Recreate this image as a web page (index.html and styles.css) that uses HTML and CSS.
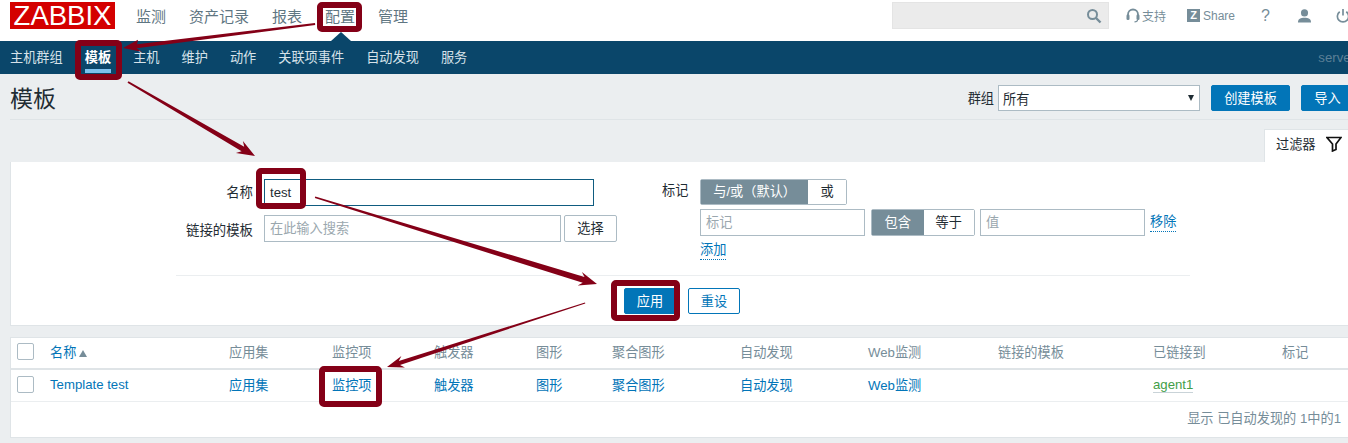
FILE: index.html
```html
<!DOCTYPE html>
<html lang="zh-CN">
<head>
<meta charset="utf-8">
<title>模板</title>
<link rel="stylesheet" href="styles.css">
</head>
<body>
<div class="page">
  <header class="topbar">
    <div class="logo">ZABBIX</div>
    <nav class="mainmenu">
      <a>监测</a><a>资产记录</a><a>报表</a><a class="current">配置</a><a>管理</a>
    </nav>
    <div class="tools">
      <div class="search">
        <svg class="search-icon" width="16" height="16" viewBox="0 0 16 16"><circle cx="6.500" cy="6.500" r="4.500" fill="none" stroke="#768d99" stroke-width="2"/><path d="M10 10l4.500 4.500" stroke="#768d99" stroke-width="2.400"/></svg>
      </div>
      <a class="tool tool-support">
        <svg width="14" height="15" viewBox="0 0 14 15"><path d="M2 8V6.500a5 5 0 0 1 10 0V8" fill="none" stroke="#768d99" stroke-width="1.800"/><rect x="0.500" y="6.500" width="3" height="5.500" rx="1.300" fill="#768d99"/><rect x="10.500" y="6.500" width="3" height="5.500" rx="1.300" fill="#768d99"/><path d="M11.500 12c0 1.400-1.300 1.800-3 1.800" fill="none" stroke="#768d99" stroke-width="1.200"/></svg>
        <span>支持</span>
      </a>
      <a class="tool tool-share"><span class="zbox">Z</span><span>Share</span></a>
      <a class="tool tool-help">?</a>
      <a class="tool tool-user">
        <svg width="15" height="14" viewBox="0 0 16 15"><circle cx="8" cy="4.200" r="3.800" fill="#768d99"/><path d="M1 14.500c0-4 3-5 7-5s7 1 7 5z" fill="#768d99"/></svg>
      </a>
      <a class="tool tool-power">
        <svg width="14" height="14" viewBox="0 0 15 15"><path d="M4 3a6 6 0 1 0 7 0" fill="none" stroke="#768d99" stroke-width="1.800"/><path d="M7.500 0v7" stroke="#768d99" stroke-width="1.800"/></svg>
      </a>
    </div>
  </header>

  <nav class="submenu">
    <div class="submenu-items">
      <a>主机群组</a><a class="active">模板</a><a>主机</a><a>维护</a><a>动作</a><a>关联项事件</a><a>自动发现</a><a>服务</a>
    </div>
    <span class="server">server</span>
  </nav>

  <main class="content">
    <div class="title-row">
      <h1>模板</h1>
      <div class="title-controls">
        <label class="group-label">群组</label>
        <div class="select"><span>所有</span><i class="select-arrow"></i></div>
        <button class="btn btn-primary btn-create">创建模板</button>
        <button class="btn btn-primary btn-import">导入</button>
      </div>
    </div>

    <div class="filter-tabs">
      <div class="filter-tab">
        <span>过滤器</span>
        <svg width="16" height="16" viewBox="0 0 16 16"><path d="M1 1.500h14L10 8v5.500L6.500 15V8z" fill="none" stroke="#111" stroke-width="1.700" stroke-linejoin="miter"/></svg>
      </div>
    </div>

    <section class="filter">
      <div class="filter-form">
        <div class="col-left">
          <div class="form-row row-name">
            <label>名称</label>
            <div class="input input-focus">test</div>
          </div>
          <div class="form-row">
            <label>链接的模板</label>
            <div class="input input-linked placeholder">在此输入搜索</div>
            <button class="btn btn-plain btn-select">选择</button>
          </div>
        </div>
        <div class="col-right">
          <label class="tag-label">标记</label>
          <div class="tag-fields">
            <div class="seg seg-op"><span class="on">与/或（默认）</span><span class="off">或</span></div>
            <div class="tag-row">
              <div class="input input-tag placeholder">标记</div>
              <div class="seg seg-match"><span class="on">包含</span><span class="off">等于</span></div>
              <div class="input input-tag placeholder">值</div>
              <a class="dotted">移除</a>
            </div>
            <a class="dotted add">添加</a>
          </div>
        </div>
      </div>
      <div class="filter-actions">
        <button class="btn btn-primary btn-apply">应用</button>
        <button class="btn btn-outline btn-reset">重设</button>
      </div>
    </section>

    <section class="list">
      <table>
        <colgroup>
          <col class="c-check"><col class="c-name"><col class="c-app"><col class="c-item"><col class="c-trig"><col class="c-graph"><col class="c-agg"><col class="c-disc"><col class="c-web"><col class="c-linked"><col class="c-to"><col class="c-tag">
        </colgroup>
        <thead>
          <tr>
            <th><i class="check"></i></th>
            <th><a class="link">名称</a><i class="sort"></i></th>
            <th>应用集</th><th>监控项</th><th>触发器</th><th>图形</th><th>聚合图形</th><th>自动发现</th><th>Web监测</th><th>链接的模板</th><th>已链接到</th><th>标记</th>
          </tr>
        </thead>
        <tbody>
          <tr>
            <td><i class="check"></i></td>
            <td><a class="link">Template test</a></td>
            <td><a class="link">应用集</a></td>
            <td><a class="link">监控项</a></td>
            <td><a class="link">触发器</a></td>
            <td><a class="link">图形</a></td>
            <td><a class="link">聚合图形</a></td>
            <td><a class="link">自动发现</a></td>
            <td><a class="link">Web监测</a></td>
            <td></td>
            <td><a class="agent">agent1</a></td>
            <td></td>
          </tr>
        </tbody>
      </table>
      <div class="list-footer">显示 已自动发现的 1中的1</div>
    </section>
  </main>
</div>

<svg class="annotations" width="1348" height="443" viewBox="0 0 1348 443">
  <g class="marks">
    <rect x="320" y="5" width="39" height="24" rx="2"/>
    <rect x="78" y="43" width="41" height="34" rx="2"/>
    <rect x="259" y="171" width="44" height="35" rx="2"/>
    <rect x="614" y="283" width="63" height="35" rx="2"/>
    <rect x="322" y="369" width="57" height="35" rx="2"/>
  </g>
  <g class="arrows">
    <polygon points="315,23 315.200,25 136.600,48.300 141.600,51.800 123,48 138,39.800 137.100,44.300"/>
    <polygon points="127.500,82.800 128.500,81.200 244.200,146.800 242.900,140.900 255,156 235.900,152.900 241.600,151.200"/>
    <polygon points="315.300,196.500 314.800,198 582.700,282.800 577.700,285.400 597,284 581.900,272 584.500,277"/>
    <polygon points="585,302.500 585.300,303.500 400,364.900 405,367.500 387,367 401.400,356.100 398.800,361.100"/>
  </g>
</svg>
</body>
</html>
```

FILE: styles.css
```css
* { box-sizing: border-box; }
html, body { margin: 0; padding: 0; height: 443px; overflow: hidden; }
body {
  background: #ebeef0;
  font-family: "Liberation Sans", "Noto Sans CJK SC", sans-serif;
  font-size: 13.200px;
  color: #1f2c33;
  position: relative;
}
.page { width: 1364px; }

/* top bar */
.topbar {
  height: 41px;
  background: #fff;
  display: flex;
  align-items: flex-start;
  padding: 2px 0 0 10px;
}
.logo {
  width: 105px;
  height: 27px;
  background: #d40000;
  color: #fff;
  font-size: 27.500px;
  line-height: 27px;
  text-align: center;
}
.mainmenu { display: flex; gap: 23px; margin-left: 21px; font-size: 15px; color: #5f7682; line-height: 30px; }
.tools { display: flex; align-items: flex-start; margin-left: auto; width: 472px; color: #768d99; }
.search {
  width: 217px;
  height: 27px;
  background: #ebebeb;
  border: 1px solid #e4e4e4;
  display: flex;
  align-items: center;
  justify-content: flex-end;
  padding-right: 6px;
}
.tool { display: flex; align-items: center; height: 27px; font-size: 12px; color: #768d99; white-space: nowrap; flex: none; }
.tool-support { margin-left: 17px; gap: 2px; }
.tool-share { margin-left: 21px; gap: 3px; }
.zbox {
  width: 13px; height: 13px; background: #768d99; color: #fff;
  font-weight: bold; font-size: 11px; line-height: 13px; text-align: center;
}
.tool-help { margin-left: 26px; font-size: 16px; }
.tool-user { margin-left: 27px; }
.tool-power { margin-left: 24px; }

/* sub nav */
.submenu {
  height: 33px;
  background: #0a466a;
  display: flex;
  justify-content: space-between;
  padding: 0 9px 0 10px;
  position: relative;
}
.submenu::before {
  content: "";
  position: absolute;
  left: 331px;
  top: -9px;
  border-left: 10px solid transparent;
  border-right: 10px solid transparent;
  border-bottom: 9px solid #0a466a;
}
.submenu-items { display: flex; gap: 22px; color: #d6e2e9; line-height: 33px; }
.submenu-items a { height: 33px; position: relative; }
.submenu-items .active { color: #fff; font-weight: bold; }
.submenu-items .active::after {
  content: ""; position: absolute; left: 0; right: 0; bottom: 1px; height: 4px; background: #7dc1ee;
}
.server { color: #5c8097; line-height: 33px; }

/* title */
.content { padding: 0 10px; }
.title-row {
  height: 46px;
  border-bottom: 1px solid #dfe4e7;
  display: flex;
  justify-content: space-between;
  align-items: flex-start;
}
h1 { margin: 0; font-size: 23px; font-weight: normal; line-height: 50px; color: #1f2c33; }
.title-controls { display: flex; align-items: center; margin-top: 11px; }
.group-label { margin-right: 4px; padding-bottom: 2px; }
.select {
  width: 202px; height: 26px; background: #fff; border: 1px solid #acbbc4;
  display: flex; align-items: center; justify-content: space-between; padding: 0 5px 0 4px;
}
.select-arrow { width: 0; height: 0; border-left: 3.500px solid transparent; border-right: 3.500px solid transparent; border-top: 6px solid #1f2c33; }
.btn {
  font-family: inherit; font-size: 13.200px; height: 26px; border-radius: 2px; padding: 0 0 2px; cursor: pointer;
}
.btn-primary { background: #0275b8; border: 1px solid #0275b8; color: #fff; }
.btn-create { width: 79px; margin-left: 11px; }
.btn-import { width: 53px; margin-left: 11px; }
.btn-plain { background: #fff; border: 1px solid #acbbc4; color: #1f2c33; }
.btn-outline { background: #fff; border: 1px solid #0275b8; color: #0275b8; }

/* filter */
.filter-tabs { display: flex; justify-content: flex-end; margin-top: 9px; }
.filter-tab {
  width: 90px; height: 33px; background: #fff; border: 1px solid #dfe4e7; border-bottom: 0;
  display: flex; align-items: center; gap: 10px; padding: 0 0 5px 11px; color: #1f2c33;
}
.filter {
  height: 164px;
  background: #fff;
  border: 1px solid #dfe4e7;
  border-top: 0;
  padding-top: 17px;
}
.filter-form { display: flex; height: 97px; margin-left: 165px; width: 1014px; border-bottom: 1px solid #ebeef0; }
.col-left { width: 486px; }
.form-row { display: flex; align-items: center; margin-bottom: 9px; }
.form-row label { width: 77px; text-align: right; margin-right: 11px; font-size: 13.400px; white-space: nowrap; }
.row-name label { position: relative; top: -2px; }
.input {
  height: 27px; background: #fff; border: 1px solid #acbbc4; padding: 0 5px; line-height: 25px;
}
.input-focus { width: 330px; border-color: #0f5c80; }
.input-linked { width: 297px; }
.placeholder { color: #9aa7ae; }
.btn-select { width: 53px; height: 27px; margin-left: 3px; }
.col-right { display: flex; }
.tag-label { width: 38px; line-height: 24px; }
.seg { display: flex; height: 26px; border: 1px solid #acbbc4; border-radius: 2px; line-height: 24px; text-align: center; }
.seg .on { background: #768d99; color: #fff; }
.seg .off { background: #fff; color: #1f2c33; }
.seg-op { width: 147px; }
.seg-op .on { width: 108px; }
.seg-op .off { width: 38px; }
.tag-row { display: flex; align-items: flex-start; margin-top: 4px; }
.input-tag { width: 165px; }
.seg-match { width: 104px; margin: 0 5px 0 6px; height: 27px; line-height: 25px; }
.seg-match .on { width: 52px; }
.seg-match .off { width: 51px; }
.dotted { color: #0275b8; border-bottom: 1px dotted #0275b8; height: 19px; line-height: 17px; display: inline-block; }
.tag-row .dotted { margin-left: 5px; margin-top: 4px; }
.add { margin-top: 5px; }
.filter-actions { display: flex; gap: 12px; margin-left: 613px; margin-top: 12px; }
.btn-apply, .btn-reset { width: 52px; }

/* list */
.list { margin-top: 11px; height: 101px; background: #fff; border: 1px solid #dfe4e7; }
table { border-collapse: collapse; table-layout: fixed; width: 1339px; }
th, td { padding: 0 0 1px; text-align: left; font-weight: normal; }
th { height: 31px; padding-bottom: 3px; color: #768d99; border-bottom: 2px solid #dfe4e7; }
td { height: 32px; border-bottom: 1px solid #ebeef0; }
.c-check { width: 39px; } .c-name { width: 179px; } .c-app { width: 103px; } .c-item { width: 102px; }
.c-trig { width: 102px; } .c-graph { width: 76px; } .c-agg { width: 128px; } .c-disc { width: 128px; }
.c-web { width: 130px; } .c-linked { width: 155px; } .c-to { width: 129px; } .c-tag { width: 68px; }
.check { display: block; width: 17px; height: 17px; margin-left: 6px; border: 1px solid #acbbc4; border-radius: 2px; background: #fff; }
.link { color: #0275b8; }
.sort { display: inline-block; margin-left: 3px; border-left: 4.500px solid transparent; border-right: 4.500px solid transparent; border-bottom: 7px solid #768d99; }
.agent { color: #429e47; border-bottom: 1px solid #c9d3d8; }
.list-footer { height: 35px; line-height: 34px; text-align: right; padding-right: 12px; color: #768d99; }

/* annotations */
.annotations { position: absolute; left: 0; top: 0; pointer-events: none; }
.marks rect { fill: none; stroke: #840017; stroke-width: 6; }
.arrows polygon { fill: #840017; }
```
